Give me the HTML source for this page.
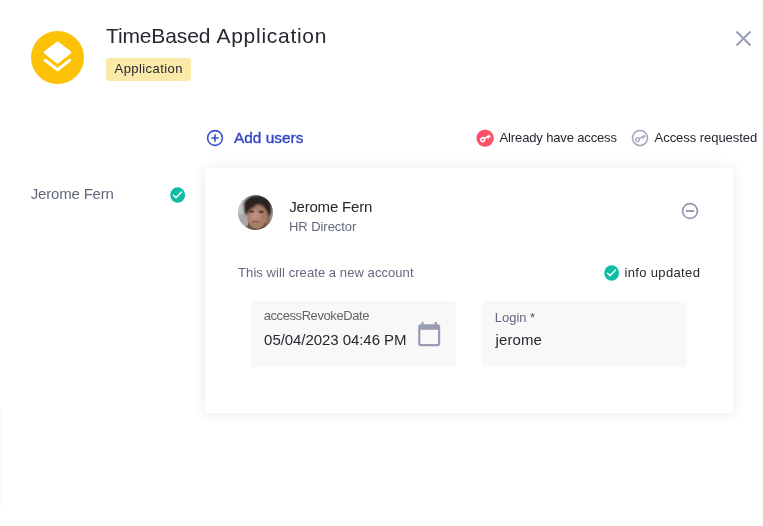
<!DOCTYPE html>
<html lang="en">
<head>
<meta charset="utf-8">
<title>TimeBased Application</title>
<style>
*{box-sizing:border-box;margin:0;padding:0}
html,body{width:763px;height:526px;background:#fff;overflow:hidden}
body{font-family:"Liberation Sans",sans-serif;color:#26272f;position:relative}
.abs{position:absolute;white-space:nowrap;line-height:1}
.appicon{left:31.1px;top:31px;width:52.7px;height:52.7px;border-radius:50%;background:#fcc207}
.title{left:106px;top:24.4px;font-size:21px;line-height:24px;color:#26272f;letter-spacing:.375px}
.badge{left:106px;top:58px;width:85px;height:23px;border-radius:3px;background:#fbe9a9;font-size:13px;line-height:21.8px;text-align:center;color:#26272f;letter-spacing:.43px;padding-left:.4px}
.close{left:733px;top:28.2px;width:21px;height:21px}
.add{left:234px;top:128.6px;font-size:15.4px;line-height:18px;color:#3548c8;-webkit-text-stroke:.4px #3548c8;letter-spacing:.02px}
.legend{font-size:13px;line-height:16px;top:129.6px;color:#26272f}
.side{left:30.8px;top:185px;font-size:15px;line-height:18px;color:#64687e;letter-spacing:-.19px}
.card{left:205px;top:168px;width:528px;height:245px;background:#fff;border-radius:4px;box-shadow:0 1px 13px rgba(30,36,56,.10)}
.name{left:289.2px;top:198.2px;font-size:15px;line-height:18px;color:#26272f;letter-spacing:-.19px}
.role{left:289px;top:218.7px;letter-spacing:-.06px;font-size:13px;line-height:16px;color:#64687e}
.note{left:238.1px;top:265px;letter-spacing:.07px;font-size:13px;line-height:16px;color:#64687e}
.upd{left:624.4px;top:264.7px;letter-spacing:.36px;font-size:13px;line-height:16px;color:#26272f}
.field{top:301px;width:205px;height:66px;background:#f8f8f8;border-radius:4px 4px 0 0}
.flabel{font-size:13px;line-height:16px;color:#64687e}
#fl1{color:#666}
.fval{font-size:15px;line-height:18px;color:#26272f}
</style>
</head>
<body>
<div id="root" style="position:absolute;left:0;top:0;width:763px;height:526px;will-change:transform">
<div class="abs appicon"></div>
<svg class="abs" style="left:27px;top:27px;width:60px;height:60px" viewBox="27 27 60 60"><path d="M57.5 42.9L69.8 52.4 57.5 62.2 45.2 52.4z" fill="#fff" stroke="#fff" stroke-width="2.8" stroke-linejoin="round"/><path d="M45.4 60.4L57.5 69.7 69.6 60.4" fill="none" stroke="#fff" stroke-width="3" stroke-linecap="round" stroke-linejoin="round"/></svg>
<div id="title" class="abs title"><span id="tw1" style="letter-spacing:-.13px">TimeBased</span> <span id="tw2" style="letter-spacing:.72px">Application</span></div>
<div class="abs badge"><span id="badget">Application</span></div>
<svg class="abs close" viewBox="0 0 21 21"><path d="M3.5 3.5l14 14M17.5 3.5l-14 14" stroke="#9a9eb4" stroke-width="2" fill="none"/></svg>

<svg class="abs" style="left:205.8px;top:128.5px;width:18px;height:18px" viewBox="0 0 18 18"><circle cx="9" cy="9" r="7.4" fill="none" stroke="#3a4ecd" stroke-width="1.6"/><path d="M9 5.3v7.4M5.3 9h7.4" stroke="#3a4ecd" stroke-width="1.6" fill="none"/></svg>
<div id="add" class="abs add">Add users</div>

<svg class="abs" style="left:474px;top:127px;width:22px;height:22px" viewBox="474 127 22 22"><circle cx="485.1" cy="138.1" r="8.65" fill="#fa5068"/><g transform="translate(485.1 138.1) rotate(-32)" fill="none" stroke="#fff" stroke-width="1.5"><circle cx="-2.9" cy="0" r="1.9"/><path d="M-1 0H5.5M2.6 0v2.5M4.7 0v2.2"/></g></svg>
<div id="leg1" class="abs legend" style="left:499.6px;letter-spacing:-.144px">Already have access</div>
<svg class="abs" style="left:629px;top:127px;width:22px;height:22px" viewBox="629 127 22 22"><circle cx="640" cy="138.1" r="7.55" fill="#fff" stroke="#a3a7be" stroke-width="1.6"/><g transform="translate(640 138.1) rotate(-32)" fill="none" stroke="#a3a7be" stroke-width="1.3"><circle cx="-2.9" cy="0" r="1.9"/><path d="M-1 0H5.5M2.6 0v2.5M4.7 0v2.2"/></g></svg>
<div id="leg2" class="abs legend" style="left:654.6px;letter-spacing:-.05px">Access requested</div>

<div id="side" class="abs side">Jerome Fern</div>
<svg class="abs" style="left:166px;top:183px;width:24px;height:24px" viewBox="166 183 24 24"><ellipse cx="177.65" cy="195" rx="7.4" ry="7.7" fill="#0fbca3"/><path d="M173.5 195.3l2.5 2.3 5.5-5.5" fill="none" stroke="#e4f7f3" stroke-width="1.5" stroke-linecap="round" stroke-linejoin="round"/></svg>

<div class="abs" style="left:0;top:406.5px;width:1.2px;height:102px;background:#fafafa"></div>
<div class="abs card"></div>
<svg class="abs" style="left:238px;top:194.6px;width:35px;height:35px" viewBox="0 0 35 35">
<defs><clipPath id="av"><circle cx="17.5" cy="17.5" r="17.45"/></clipPath><filter id="bl" x="-30%" y="-30%" width="160%" height="160%"><feGaussianBlur stdDeviation="0.8"/></filter><filter id="bl2" x="-30%" y="-30%" width="160%" height="160%"><feGaussianBlur stdDeviation="0.55"/></filter></defs>
<g clip-path="url(#av)">
<rect width="35" height="35" fill="#b4b6b5"/>
<g filter="url(#bl)">
<rect x="-3" y="-3" width="12" height="22" fill="#c4c6c5"/>
<rect x="-3" y="19" width="11" height="19" fill="#a6a8a8"/>
<rect x="30" y="6" width="8" height="32" fill="#a3a3a2"/>
<path d="M5 34l5-4 4 1 2 5H4z" fill="#44566b"/>
<path d="M27 16l5.500 1.500-.5 10-3.500 6.500-4-1z" fill="#85594a"/>
<ellipse cx="19.500" cy="9.500" rx="14" ry="9.300" fill="#2b211e"/>
<ellipse cx="8.300" cy="14" rx="2.600" ry="6" fill="#2b211e"/>
<ellipse cx="31.300" cy="14.500" rx="2.400" ry="6.200" fill="#2b211e"/>
<ellipse cx="19.300" cy="22.300" rx="10.300" ry="12.800" fill="#a67c6b"/>
<ellipse cx="17.500" cy="21.500" rx="5.500" ry="6" fill="#b98d7b"/>
<path d="M8 9c3-2 8-2.500 12-2l-1.500 2.500c-1 2-3 3.500-5.500 4-.5 1.500-1.500 3-3.500 3.500-1.500-2-2-5-1.500-8z" fill="#2e2420"/>
<path d="M19 6.500c4-.5 9 .5 11.500 3.500l-.5 4c-1-2-3-3.500-5.500-3.800-2 0-4-.3-5.500-1.200z" fill="#2e2420"/>
</g>
<g filter="url(#bl2)">
<ellipse cx="13.300" cy="16.600" rx="2.800" ry="1.300" fill="#5e4137"/>
<ellipse cx="23.300" cy="16.900" rx="2.800" ry="1.300" fill="#5e4137"/>
<ellipse cx="17.600" cy="26.400" rx="3.600" ry=".9" fill="#94574d"/>
<path d="M10.300 27c2 4.500 5 6.500 8.700 6.500s6.800-2.500 8.500-7c1.200 3.500-.5 8.500-2 9.500h-13c-2-2-3.200-5.500-2.200-9z" fill="#74503f"/>
<ellipse cx="17" cy="21.500" rx="1.300" ry="2.600" fill="#c0937f"/>
</g>
</g></svg>
<div id="name" class="abs name">Jerome Fern</div>
<div id="role" class="abs role">HR Director</div>
<svg class="abs" style="left:681.05px;top:202.1px;width:18px;height:18px" viewBox="0 0 18 18"><circle cx="9" cy="9" r="7.4" fill="none" stroke="#9498b0" stroke-width="1.7"/><path d="M4.9 9h8.2" stroke="#9498b0" stroke-width="1.9"/></svg>

<div id="note" class="abs note">This will create a new account</div>
<svg class="abs" style="left:600.2px;top:261.1px;width:24px;height:24px" viewBox="166 183 24 24"><ellipse cx="177.65" cy="195" rx="7.4" ry="7.7" fill="#0fbca3"/><path d="M173.5 195.3l2.5 2.3 5.5-5.5" fill="none" stroke="#e4f7f3" stroke-width="1.5" stroke-linecap="round" stroke-linejoin="round"/></svg>
<div id="upd" class="abs upd">info updated</div>

<div class="abs field" style="left:251px"></div>
<div id="fl1" class="abs flabel" style="left:263.7px;top:307.9px;letter-spacing:-.42px">accessRevokeDate</div>
<div id="fv1" class="abs fval" style="left:264.1px;top:331px;letter-spacing:-.06px">05/04/2023 04:46 PM</div>
<svg class="abs" style="left:415.9px;top:321.2px;width:26.4px;height:26.4px" viewBox="0 0 24 24"><path fill="#999db4" d="M20 3h-1V1h-2v2H7V1H5v2H4c-1.1 0-2 .9-2 2v16c0 1.1.9 2 2 2h16c1.1 0 2-.9 2-2V5c0-1.1-.9-2-2-2zm0 18H4V8h16v13z"/></svg>

<div class="abs field" style="left:482px"></div>
<div id="fl2" class="abs flabel" style="left:494.7px;top:310px">Login <span style="color:#555">*</span></div>
<div id="fv2" class="abs fval" style="left:495.5px;top:331px;letter-spacing:.12px">jerome</div>
</div>
</body>
</html>
